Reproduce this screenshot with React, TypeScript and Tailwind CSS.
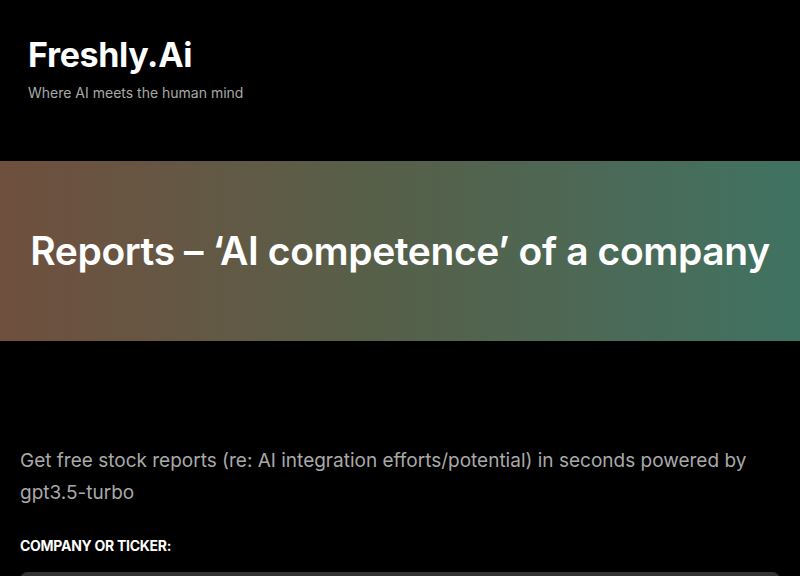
export default function App() {
  return (
    <main className="min-h-screen bg-black text-white" style={{ fontFamily: "Inter, 'Noto Sans', sans-serif" }}>
      <header className="px-7 pt-[35px] h-[161px]">
        <h1 className="text-[34px] font-bold leading-[40px] tracking-[-0.01em]">Freshly.Ai</h1>
        <p className="mt-[7px] text-[14px] text-[#a8a8a8]">Where AI meets the human mind</p>
      </header>

      <section className="h-[180px] flex items-center justify-center bg-gradient-to-r from-[#6f4f3e] via-[#55604a] to-[#3f7262]">
        <h2 className="text-[39px] font-semibold tracking-[-0.01em] text-white">
          Reports – ‘AI competence’ of a company
        </h2>
      </section>

      <section className="px-5 pt-[104px]">
        <p className="text-[19px] leading-[32px] text-[#a9a9a9] max-w-[740px]">
          Get free stock reports (re: AI integration efforts/potential) in seconds powered by gpt3.5-turbo
        </p>
        <label className="block mt-[26px] text-[14px] font-bold uppercase tracking-[-0.02em]">Company or ticker:</label>
        <input type="text" className="mt-[16px] w-full h-[44px] rounded-lg bg-[#333333] outline-none px-4 text-white" />
      </section>
    </main>
  );
}
